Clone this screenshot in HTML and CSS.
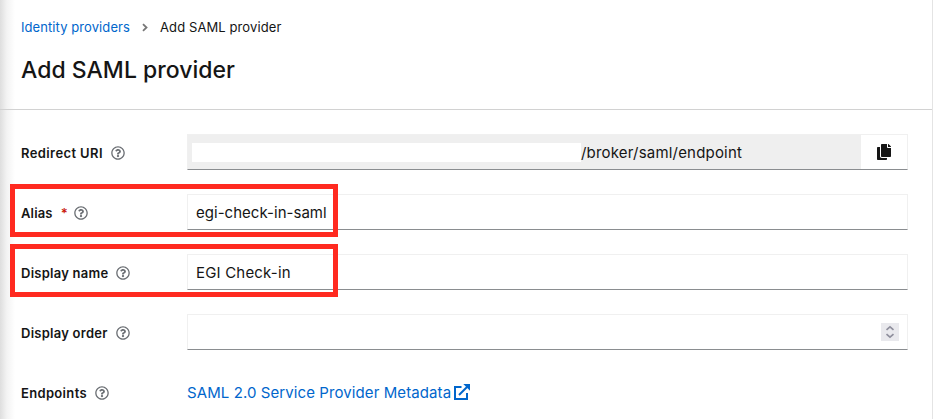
FILE: index.html
```html
<!DOCTYPE html>
<html lang="en">
<head>
<meta charset="utf-8">
<title>Add SAML provider</title>
<link rel="stylesheet" href="styles.css">
</head>
<body>
<svg class="defs" aria-hidden="true">
  <symbol id="help" viewBox="0 0 512 512"><path d="M256 8C119.043 8 8 119.083 8 256c0 136.997 111.043 248 248 248s248-111.003 248-248C504 119.083 392.957 8 256 8zm0 448c-110.532 0-200-89.431-200-200 0-110.495 89.472-200 200-200 110.491 0 200 89.471 200 200 0 110.53-89.431 200-200 200zm107.244-255.2c0 67.052-72.421 68.084-72.421 92.863V300c0 6.627-5.373 12-12 12h-45.647c-6.627 0-12-5.373-12-12v-8.659c0-35.745 27.1-50.034 47.579-61.516 17.561-9.845 28.324-16.541 28.324-29.579 0-17.246-21.999-28.693-39.784-28.693-23.189 0-33.894 10.977-48.942 29.969-4.057 5.12-11.46 6.071-16.666 2.124l-27.824-21.098c-5.107-3.872-6.251-11.066-2.644-16.363C184.846 131.491 214.94 112 261.794 112c49.071 0 101.45 38.304 101.45 88.8zM298 368c0 23.159-18.841 42-42 42s-42-18.841-42-42 18.841-42 42-42 42 18.841 42 42z"/></symbol>
</svg>
<main class="page">
  <header class="head">
    <nav class="crumbs">
      <a class="crumb-link">Identity providers</a>
      <svg class="chevron" viewBox="0 0 6 8"><path d="M1 .7 4.5 4 1 7.3"/></svg>
      <span class="crumb-current">Add SAML provider</span>
    </nav>
    <h1 class="title">Add SAML provider</h1>
  </header>
  <form class="form">
    <div class="row">
      <label class="label"><span class="t-redirect">Redirect URI</span><svg class="help"><use href="#help"/></svg></label>
      <div class="field field-readonly">
        <span class="mask"></span><span class="uri">/broker/saml/endpoint</span>
        <span class="copy"><svg viewBox="0 0 448 512"><path d="M320 448v40c0 13.255-10.745 24-24 24H24c-13.255 0-24-10.745-24-24V120c0-13.255 10.745-24 24-24h72v296c0 30.879 25.121 56 56 56h168zm0-344V0H152c-13.255 0-24 10.745-24 24v368c0 13.255 10.745 24 24 24h272c13.255 0 24-10.745 24-24V128H344c-13.2 0-24-10.8-24-24zm120.971-31.029L375.029 7.029A24 24 0 0 0 358.059 0H352v96h96v-6.059a24 24 0 0 0-7.029-16.97z"/></svg></span>
      </div>
    </div>
    <div class="row marked">
      <label class="label"><span class="t-alias">Alias</span><span class="required">*</span><svg class="help"><use href="#help"/></svg></label>
      <div class="field"><span class="v-alias">egi-check-in-saml</span></div>
    </div>
    <div class="row marked">
      <label class="label"><span class="t-name">Display name</span><svg class="help"><use href="#help"/></svg></label>
      <div class="field"><span class="v-name">EGI Check-in</span></div>
    </div>
    <div class="row">
      <label class="label"><span class="t-order">Display order</span><svg class="help"><use href="#help"/></svg></label>
      <div class="field"><span class="spinner"><svg viewBox="0 0 18 18"><path d="M5.5 6.8 9 3.8l3.5 3M5.5 11.2l3.5 3 3.5-3"/></svg></span></div>
    </div>
    <div class="row">
      <label class="label"><span class="t-end">Endpoints</span><svg class="help"><use href="#help"/></svg></label>
      <a class="metadata"><span class="t-meta">SAML 2.0 Service Provider Metadata</span><svg viewBox="0 0 16 16"><path class="ext-box" d="M7.5 3H1v12h12V9"/><path class="ext-line" d="m5 11 8-8"/><path class="ext-head" d="M9.3 0H16v6.7z"/></svg></a>
    </div>
  </form>
</main>
</body>
</html>
```
FILE: styles.css
```css
*, *::before, *::after { box-sizing: border-box; }
body { margin: 0; background: #fff; color: #151515; font-family: Inter, "Liberation Sans", sans-serif; overflow: hidden; }
.defs { display: none; }
.page { position: relative; height: 419px; border-right: 1px solid #e4e4e4; }
.page::before { content: ""; position: absolute; left: 0; top: 0; width: 15px; height: 419px; background: linear-gradient(to right, #dedede, #f3f3f3 45%, rgba(255,255,255,0)); }
.head { position: relative; height: 110px; padding: 17px 21px 0; border-bottom: 1px solid #d2d2d2; }
.crumbs { display: flex; align-items: center; height: 20px; font-size: 13px; white-space: nowrap; }
.crumb-link { width: 109px; color: #06c; letter-spacing: .08px; }
.crumb-current { color: #151515; letter-spacing: .1px; }
.chevron { width: 6px; height: 9px; margin: 0 12px; fill: none; stroke: #777; stroke-width: 1.8; }
.title { margin: 17px 0 0; font-size: 23px; line-height: 32px; font-weight: 500; letter-spacing: .02px; white-space: nowrap; }
.form { display: flex; flex-direction: column; gap: 24px; padding: 24px 24px 0 21px; }
.row { position: relative; display: grid; grid-template-columns: 166px 1fr; height: 36px; align-items: center; }
.marked::after { content: ""; position: absolute; left: -11px; top: -10px; width: 328px; height: 53px; border: 5px solid #ff2a20; }
.label { display: flex; align-items: center; height: 36px; padding-top: 2px; font-size: 13px; font-weight: 600; white-space: nowrap; }
.t-redirect { letter-spacing: .4px; }
.t-alias { letter-spacing: .15px; }
.t-name, .t-order { letter-spacing: .25px; }
.t-end { letter-spacing: .33px; }
.help { width: 14px; height: 14px; margin-left: 8px; fill: #6a6e73; }
.required { width: 6px; margin-left: 8px; margin-right: 7px; color: #c9190b; }
.required + .help { margin-left: 0; }
.field { display: flex; align-items: center; height: 36px; padding-left: 8px; border: 1px solid #f0f0f0; border-bottom-color: #8a8d90; font-size: 15px; white-space: nowrap; }
.field-readonly { background: #efefef; padding-left: 4px; }
.mask { width: 389px; height: 19px; background: #fff; }
.uri, .v-name { letter-spacing: .19px; }
.v-alias { letter-spacing: .03px; }
.t-meta { letter-spacing: .09px; }
.copy { display: flex; align-items: center; justify-content: center; width: 46px; height: 34px; margin-left: auto; background: #fff; }
.copy svg { width: 14px; height: 16px; fill: #151515; }
.spinner { width: 18px; height: 18px; margin: 0 8px 0 auto; background: #e9e9ed; }
.spinner svg { display: block; fill: none; stroke: #8f8f9d; stroke-width: 1.7; }
.metadata { display: flex; align-items: center; gap: 3px; color: #06c; font-size: 15px; white-space: nowrap; }
.metadata svg { width: 16px; height: 16px; fill: #06c; }
.metadata .ext-box, .metadata .ext-line { fill: none; stroke: #06c; stroke-width: 2; }
```
